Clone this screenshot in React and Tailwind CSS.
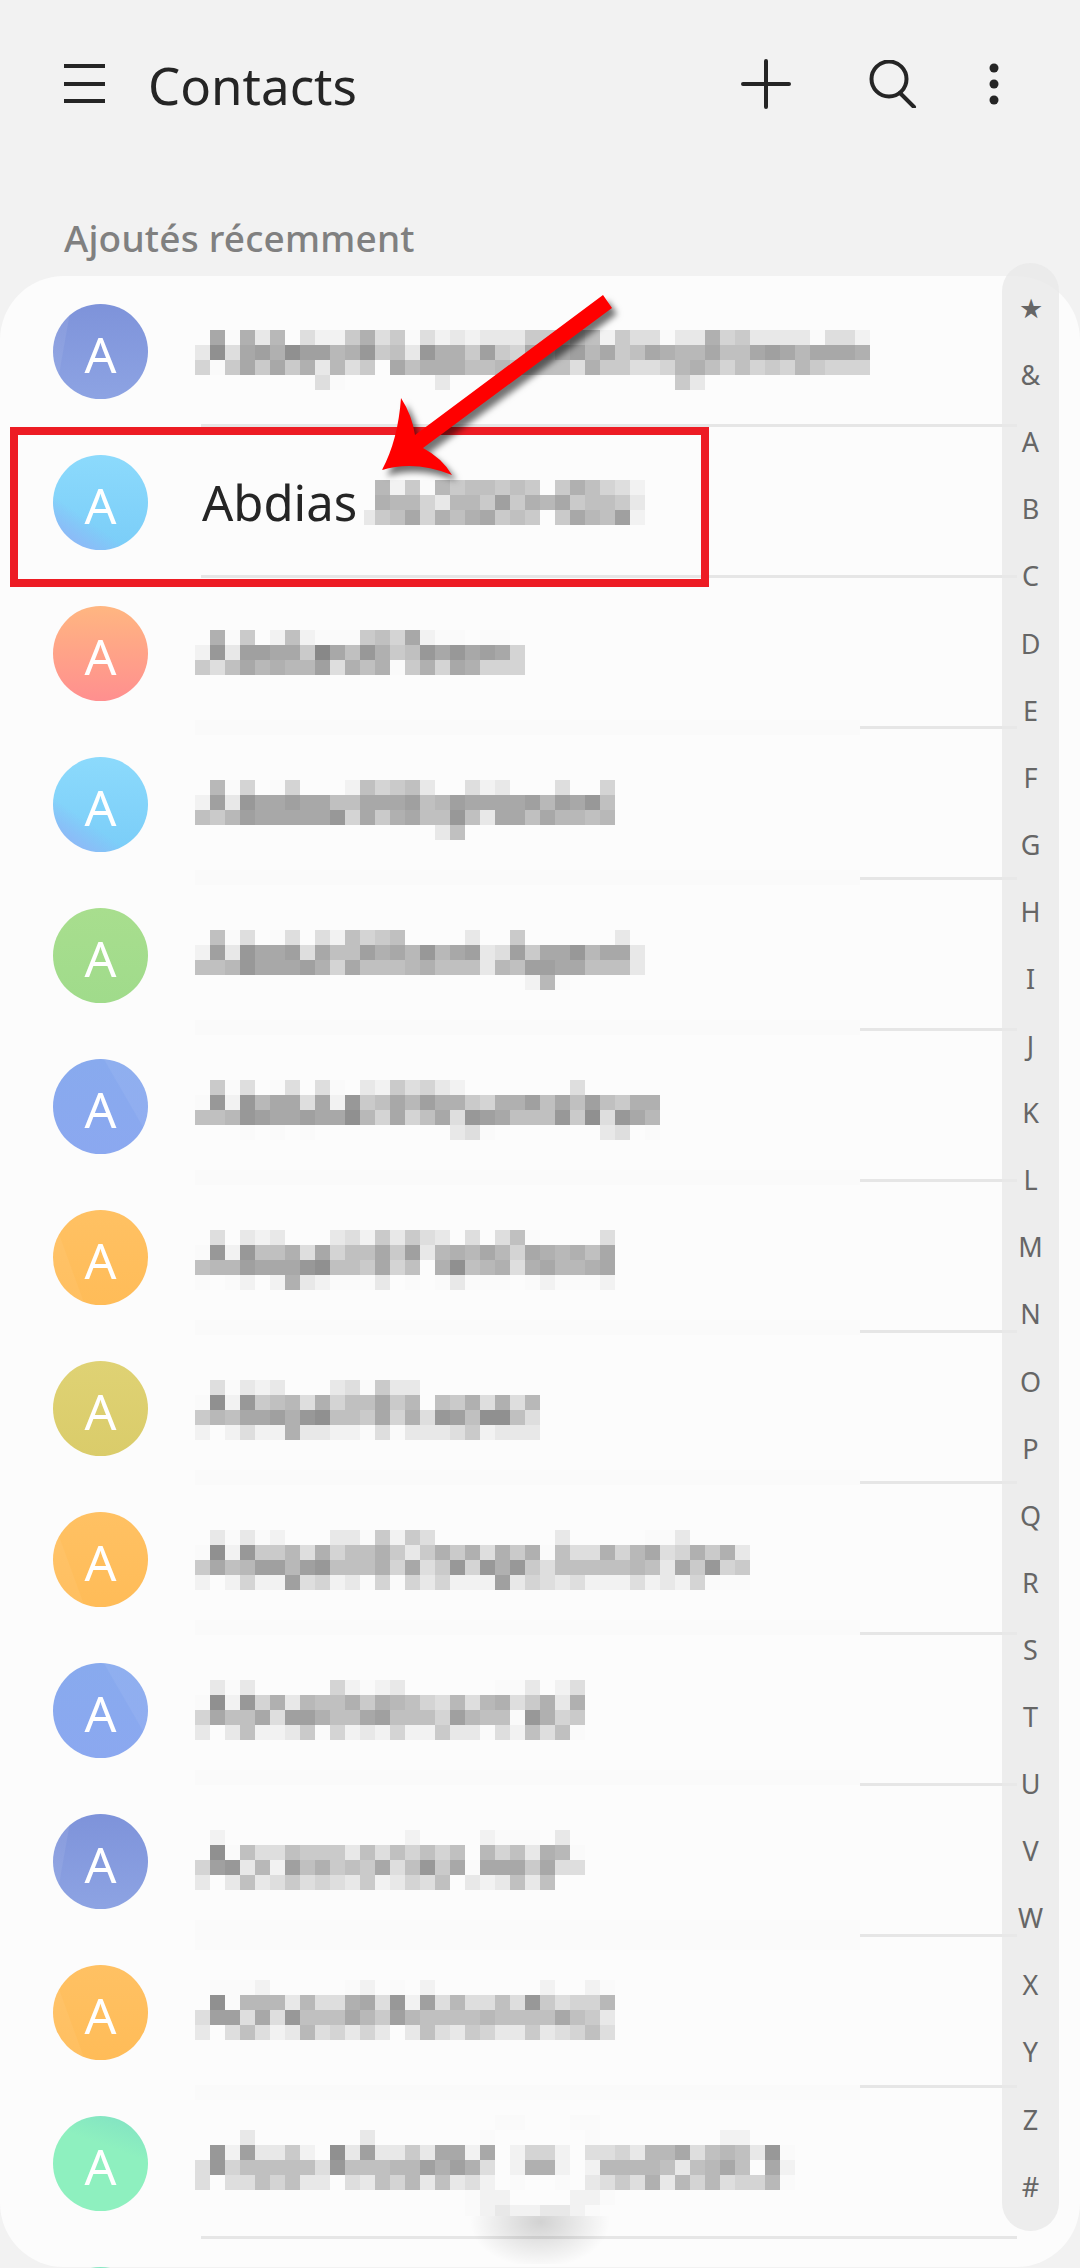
import React from 'react';

const GRAYS = {
  f: '#fafafa', e: '#f2f2f2', d: '#e8e8e8', c: '#dedede', b: '#d4d4d4', a: '#cacaca', 9: '#c0c0c0',
  8: '#b8b8b8', 7: '#b0b0b0', 6: '#a8a8a8', 5: '#a0a0a0', 4: '#989898', 3: '#909090', 2: '#888888',
};

const SKY = 'bg-[linear-gradient(35deg,#8bb9f7_0%,#8bbcf7_16%,transparent_34%),linear-gradient(180deg,#8cdafc,#7acdf8)]';
const INDIGO = 'bg-[linear-gradient(100deg,rgba(255,255,255,0.07)_0%,rgba(255,255,255,0.07)_16%,transparent_17%),linear-gradient(180deg,#7e93da,#8da3e3)]';
const CORAL = 'bg-[linear-gradient(180deg,#ffb681,#ff8f8f)]';
const GREEN = 'bg-[linear-gradient(180deg,#a8de8e,#a0db8b)]';
const BLUE = 'bg-[linear-gradient(60deg,transparent_70%,rgba(255,255,255,0.06)_71%),linear-gradient(180deg,#88aaee,#8ba8f0)]';
const ORANGE = 'bg-[linear-gradient(70deg,rgba(255,255,255,0.05)_0%,rgba(255,255,255,0.05)_24%,transparent_25%),linear-gradient(180deg,#ffc163,#ffbc58)]';
const OLIVE = 'bg-[linear-gradient(180deg,#dfd274,#dacc6a)]';
const MINT = 'bg-[linear-gradient(200deg,#80e0c4_0%,#8ef0bf_35%,#8ef0bf_100%)]';

// one entry per row: gray level of each 15px block; band = the row of blocks that hides the divider
const rows = [
  { color: INDIGO, band: [], cells: [
    '06f7d80ceea7cafcededddaaa89eaccfdd7baddddfcce',
    'd3c657355874a9d477a5ab686586a9678869965686667',
    'bfa6a6a7d8ca0697779989999c7aaccb879b9bab8abbb',
    '00000000cf000000d000000000000000ad',
  ] },
  { color: SKY, band: [], abdias: true, cells: [
    '8eaf8a99a9a0a79bce',
    '788bd88a5a786a99ad',
    'a96b7976a9a0a6895e',
  ] },
  { color: CORAL, band: [6], cells: [
    '07fa0e9efffa9b6eff0ff',
    'e4d5566a26947a9464656b',
    'ac9687885c797fa7b67bbb',
  ] },
  { color: SKY, band: [6], cells: [
    '08fb0fb000e9ba9d00ced000c00b',
    'e5d4665669966659856666585649',
    '9a85666664b6a769949d66968898',
    '0000000000000000d9',
  ] },
  { color: GREEN, band: [6], cells: [
    '09fc0fc0ce9ba90000d00a000000d',
    'e5d4665c699576848 65dc5a66486 6d'.replace(/ /g, ''),
    '99846665 7b69998799 9d89556699 9d'.replace(/ /g, ''),
    '0000000000000000000000e8f',
  ] },
  { color: BLUE, band: [6], cells: [
    '0afc0fc0cf0deacbde0000000c',
    'f4e4866c6e4a968577ab77596959a77',
    '998456656638b6b96c456999 4a3c468'.replace(/ /g, ''),
    '000f0f0f000000000dcf0000000dc0f',
  ] },
  { color: ORANGE, band: [6], cells: [
    '0c0ded000dceadacd0c0c9f0000c',
    'f4e4997c6b996a5d87868b678796',
    '98856664399a6b907398 7c768876'.replace(/ /g, ''),
    'f0fe0e7defffd0f0fdfff0fefffe',
  ] },
  { color: OLIVE, band: [6], cells: [
    '0cfded000dcfadd',
    'f3e4a98c7b996a809a7c7c8',
    'a8966574399a6b7c459339c',
    'e0ecee7ddeefcfdddcaeddd',
  ] },
  { color: ORANGE, band: [6], cells: [
    '0dfdfe000ddfaeac00000000d00000ffd',
    'f3e4aa8c7b997ada7a7c7a7f9cc7b86cb7a7d',
    'a698558549997b6ca4b474ac9999989d6a4ba',
    'e0ebee5cbedfbfbdbeee5dbcdceeecedebfff',
  ] },
  { color: BLUE, band: [6], cells: [
    '0dfd00000befed000000ffd0ec',
    'f3e4b7d8997a789bc8c87ca7d7',
    'b6996c55799659 99b589 9f47ba'.replace(/ /g, ''),
    'd0d9eedafbedebeeaddfce9c9f',
  ] },
  { color: INDIGO, band: [6, 7], cells: [
    '0e000000000000e0000efff0d',
    '03f9cc9aaad9c9b9b908b9d78f',
    'b54d8e597a9a6c94a6f666a6cc',
    'd0d9dcacbcdaedbc90ded9d9',
  ] },
  { color: ORANGE, band: [7], cells: [
    '0fffe00000fe0f0e0000000e00ef',
    '03f888d8cc76c4e5c8cc9c4acbb8',
    'c55c6c499968a58999989999 69ad'.replace(/ /g, ''),
    'd0c9ced8cbdbd0d9cdabddadcb9c',
  ] },
  { color: MINT, band: [], lift: 15, clip: 101, cells: [
    '00000000000000000000ff000ff',
    '000d0000000d0000000f000000f00000000ee',
    '04e5ddae03d5dda d66e60ebbe0ccbd8 86c989d4f'.replace(/ /g, ''),
    'c4b99999c49998857 57c0e77e0e888 89d9869 06e'.replace(/ /g, ''),
    'c0cc9b9dd0cd9b8d9dce0f00f0dcac7d8b8cbb8f',
    '000000000000000000fee0000eef',
    '000000000000000000fedeeddef',
  ] },
];

const letters = ['★', '&', 'A', 'B', 'C', 'D', 'E', 'F', 'G', 'H', 'I', 'J', 'K', 'L', 'M', 'N', 'O', 'P', 'Q', 'R', 'S', 'T', 'U', 'V', 'W', 'X', 'Y', 'Z', '#'];

function Mosaic({ cells, band = [], marginTop, clip }) {
  const lines = [...cells];
  band.forEach((at) => {
    while (lines.length < at) lines.push('');
    lines[at] = 'band';
  });
  return (
    <div className="shrink-0" style={{ marginTop, height: clip }}>
      <div className={clip ? 'h-full overflow-hidden' : ''}>
        {lines.map((line, y) =>
          line === 'band' ? (
            <div key={y} className="h-[15px] w-[665px] bg-[#fafafa]" />
          ) : (
            <div key={y} className="flex h-[15px]">
              {line.split('').map((c, x) => (
                <div key={x} className="h-[15px] w-[15px] shrink-0" style={{ backgroundColor: GRAYS[c] }} />
              ))}
            </div>
          )
        )}
      </div>
    </div>
  );
}

function Avatar({ color, children }) {
  return (
    <div className={`flex h-[95px] w-[95px] shrink-0 items-center justify-center rounded-full text-[50px] leading-none font-normal text-white ${color}`}>
      {children}
    </div>
  );
}

function ContactRow({ row, i }) {
  const top = 54 - i - 28 - (row.lift || 0);
  return (
    <div className="h-[151px]">
      <div className="flex h-[148px] items-start pt-[28px] pl-[53px]">
        <Avatar color={row.color}>
          <span className="mt-[5px]">A</span>
        </Avatar>
        {row.abdias ? (
          <div className="ml-[47px] flex items-start">
            <span className="mt-[22px] w-[169px] pl-[7px] text-[49px] leading-[50px] text-[#252525]">Abdias</span>
            <div className="mt-[55px] h-[15px] w-[11px] bg-[#e8e8e8]" />
            <Mosaic cells={row.cells} marginTop={top} />
          </div>
        ) : (
          <div className="ml-[47px]">
            <Mosaic cells={row.cells} band={row.band} marginTop={top} clip={row.clip} />
          </div>
        )}
      </div>
      <div className={`mr-[63px] h-[3px] bg-[#e6e6e6] ${i < 2 || i === 12 ? 'ml-[201px]' : 'ml-[860px]'}`} />
    </div>
  );
}

export default function App() {
  return (
    <div className="relative h-[2268px] w-[1080px] overflow-hidden bg-[#f2f2f2] font-['Noto_Sans','Liberation_Sans',sans-serif]">
      {/* top bar */}
      <div className="flex h-[168px] items-center pr-[81px] pl-[64px] text-[#252525]">
        <svg width="41" height="40" viewBox="0 0 41 40" fill="none" stroke="currentColor" strokeWidth="4">
          <path d="M0 2h41M0 20h41M0 37h41" />
        </svg>
        <h1 className="mt-[2px] ml-[43px] text-[51px] leading-none font-normal">Contacts</h1>
        <div className="ml-auto flex items-center">
          <svg width="50" height="50" viewBox="0 0 50 50" fill="none" stroke="currentColor" strokeWidth="4" strokeLinecap="round">
            <path d="M25 2v46M2 25h46" />
          </svg>
          <svg className="ml-[78px]" width="48" height="48" viewBox="0 0 48 48" fill="none" stroke="currentColor" strokeWidth="4" strokeLinecap="round">
            <circle cx="20" cy="19" r="17.5" />
            <path d="M31 33l14 14" />
          </svg>
          <svg className="ml-[72px]" width="10" height="42" viewBox="0 0 10 42" fill="currentColor">
            <circle cx="5" cy="5" r="4.5" />
            <circle cx="5" cy="21" r="4.5" />
            <circle cx="5" cy="37" r="4.5" />
          </svg>
        </div>
      </div>

      <div className="h-[108px] pt-[50px] pl-[64px] text-[37px] leading-[40px] font-medium tracking-[0.2px] text-[#808080]">Ajoutés récemment</div>

      {/* contact list */}
      <div className="h-[1991px] rounded-[64px] bg-[#fcfcfc]">
        {rows.map((row, i) => (
          <ContactRow key={i} row={row} i={i} />
        ))}
        <div className="h-px pt-[28px] pl-[53px]">
          <Avatar color={MINT} />
        </div>
      </div>

      {/* floating button shadow */}
      <div className="absolute top-[2216px] left-[465px] h-[48px] w-[150px] bg-[radial-gradient(ellipse_70px_46px_at_50%_12%,rgba(0,0,0,0.17),transparent)]" />

      {/* alphabet index */}
      <div className="absolute top-[263px] left-[1002px] flex h-[1968px] w-[57px] flex-col items-center rounded-full bg-[#e8e8e8]/80 pt-[11px] text-[27px] leading-none text-[#666666]">
        {letters.map((l) => (
          <div key={l} className="flex h-[67.1px] shrink-0 items-center justify-center">{l}</div>
        ))}
      </div>

      {/* annotation */}
      <div className="absolute top-[427px] left-[10px] h-[160px] w-[699px] border-8 border-[#ed1c24]" />
      <svg className="absolute top-[285px] left-[370px] drop-shadow-[5px_6px_3px_rgba(0,0,0,0.55)]" width="260" height="200" viewBox="370 285 260 200">
        <path d="M603 295L612 308L423 448Q442 458 452 475Q415 460 382 470Q398 440 401 398Q412 415 415 435Z" fill="#ff0000" />
      </svg>
    </div>
  );
}
